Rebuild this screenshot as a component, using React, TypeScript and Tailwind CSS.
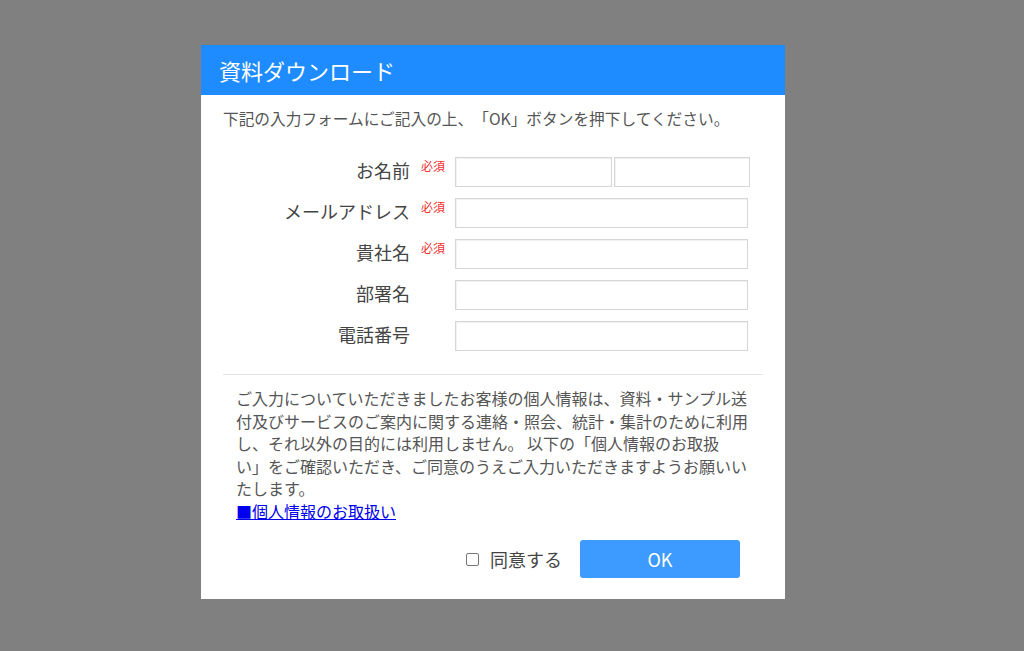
import React from 'react'

const font = { fontFamily: '"Noto Sans CJK JP", "Noto Sans", sans-serif' }

const rows = [
  { label: 'お名前', required: true, split: true },
  { label: 'メールアドレス', required: true },
  { label: '貴社名', required: true },
  { label: '部署名', required: false },
  { label: '電話番号', required: false },
]

function Field({ className = '' }: { className?: string }) {
  return (
    <input
      type="text"
      className={`h-[30px] border border-[#d6d6d6] bg-white shadow-[inset_1px_1px_1px_rgba(0,0,0,0.06)] outline-none ${className}`}
    />
  )
}

export default function App() {
  return (
    <div className="w-full h-[651px] bg-[#808080] pt-[45px] pl-[201px] [text-spacing-trim:space-all]" style={font}>
      <div className="w-[584px] h-[554px] bg-white flex flex-col">
        {/* Header */}
        <div className="h-[50px] bg-[#1e8cff] flex items-center px-[18px]">
          <h1 className="text-white text-[22px] font-normal">資料ダウンロード</h1>
        </div>

        <div className="px-[22px] flex flex-col">
          <p className="pt-[14px] text-[15.7px] leading-[20px] text-[#555]">
            下記の入力フォームにご記入の上、「OK」ボタンを押下してください。
          </p>

          {/* Form */}
          <div className="mt-[28px] flex flex-col gap-[11px]">
            {rows.map(row => (
              <div key={row.label} className="flex h-[30px]">
                <div className="w-[187px] text-right text-[18px] leading-[26px] text-[#444]">
                  {row.label}
                </div>
                <div className="w-[45px] pl-[11px] text-[12px] leading-[18px] text-[#f03030]">
                  {row.required ? '必須' : ''}
                </div>
                {row.split ? (
                  <div className="flex gap-[2px]">
                    <Field className="w-[157px]" />
                    <Field className="w-[136px]" />
                  </div>
                ) : (
                  <Field className="w-[293px]" />
                )}
              </div>
            ))}
          </div>

          <div className="mt-[23px] border-t border-[#e4e4e4]" />

          {/* Privacy note */}
          <div className="pt-[12px] pl-[13px] text-[16px] leading-[22.5px] text-[#555]">
            ご入力についていただきましたお客様の個人情報は、資料・サンプル送
            <br />
            付及びサービスのご案内に関する連絡・照会、統計・集計のために利用
            <br />
            し、それ以外の目的には利用しません。 以下の「個人情報のお取扱
            <br />
            い」をご確認いただき、ご同意のうえご入力いただきますようお願いい
            <br />
            たします。
            <br />
            <a href="#" className="text-[#0000ee] underline">■個人情報のお取扱い</a>
          </div>

          {/* Footer */}
          <div className="mt-[18px] flex items-center justify-end pr-[23px]">
            <label className="flex items-center gap-[11px] text-[18px] text-[#444]">
              <span className="w-[13px] h-[13px] border border-[#777] rounded-[2px] bg-white" />
              同意する
            </label>
            <button className="ml-[18px] w-[160px] h-[38px] rounded-[3px] bg-[#3d9bff] text-white text-[18px]">
              OK
            </button>
          </div>
        </div>
      </div>
    </div>
  )
}
